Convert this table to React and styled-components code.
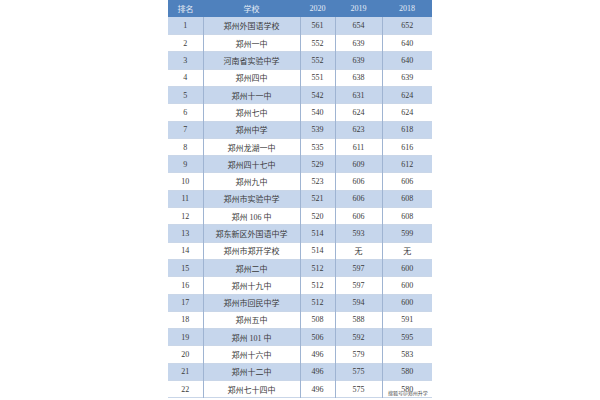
import React from "react";
import styled, { createGlobalStyle } from "styled-components";

const GlobalStyle = createGlobalStyle`
  html, body {
    margin: 0;
    padding: 0;
    background: #ffffff;
    overflow: hidden;
  }
`;

const Page = styled.div`
  width: 600px;
  height: 400px;
  display: flex;
  justify-content: center;
  align-items: flex-start;
  position: relative;
  font-family: "Liberation Serif", "Noto Sans CJK SC", serif;
`;

const Table = styled.table`
  width: 264px;
  border-collapse: collapse;
  table-layout: fixed;
  font-size: 8px;
  color: #3a3a3a;
`;

const HeadRow = styled.tr`
  height: 17.3px;
  background: #4f81bd;
`;

const Th = styled.th`
  font-weight: normal;
  color: #e4ecf6;
  text-align: center;
  padding: 0;
  width: ${(p) => p.w}px;
`;

const Row = styled.tr`
  height: 17.3px;
  background: ${(p) => (p.shade ? "#c6d6ec" : "#ffffff")};
  border-bottom: 1px solid #c9d6e8;
`;

const Td = styled.td`
  text-align: center;
  padding: 0;
  border-left: ${(p) => (p.first ? "none" : "1px solid #9fb4d2")};
  white-space: nowrap;
`;

const Watermark = styled.span`
  position: absolute;
  left: 388px;
  top: 389px;
  font-family: "Noto Sans CJK SC", sans-serif;
  font-size: 5px;
  color: #4a4a4a;
  text-shadow: 0 0 1px #fff, 0 0 1px #fff;
`;

const cols = [
  { label: "排名", w: 35 },
  { label: "学校", w: 97 },
  { label: "2020", w: 35 },
  { label: "2019", w: 47 },
  { label: "2018", w: 50 },
];

const rows = [
  ["郑州外国语学校", "561", "654", "652"],
  ["郑州一中", "552", "639", "640"],
  ["河南省实验中学", "552", "639", "640"],
  ["郑州四中", "551", "638", "639"],
  ["郑州十一中", "542", "631", "624"],
  ["郑州七中", "540", "624", "624"],
  ["郑州中学", "539", "623", "618"],
  ["郑州龙湖一中", "535", "611", "616"],
  ["郑州四十七中", "529", "609", "612"],
  ["郑州九中", "523", "606", "606"],
  ["郑州市实验中学", "521", "606", "608"],
  ["郑州 106 中", "520", "606", "608"],
  ["郑东新区外国语中学", "514", "593", "599"],
  ["郑州市郑开学校", "514", "无", "无"],
  ["郑州二中", "512", "597", "600"],
  ["郑州十九中", "512", "597", "600"],
  ["郑州市回民中学", "512", "594", "600"],
  ["郑州五中", "508", "588", "591"],
  ["郑州 101 中", "506", "592", "595"],
  ["郑州十六中", "496", "579", "583"],
  ["郑州十二中", "496", "575", "580"],
  ["郑州七十四中", "496", "575", "580"],
];

export default function App() {
  return (
    <>
      <GlobalStyle />
      <Page>
        <Table>
          <thead>
            <HeadRow>
              {cols.map((c) => (
                <Th key={c.label} w={c.w}>
                  {c.label}
                </Th>
              ))}
            </HeadRow>
          </thead>
          <tbody>
            {rows.map((r, i) => (
              <Row key={i} shade={i % 2 === 0}>
                <Td first>{i + 1}</Td>
                {r.map((v, j) => (
                  <Td key={j}>{v}</Td>
                ))}
              </Row>
            ))}
          </tbody>
        </Table>
        <Watermark>搜狐号@郑州升学</Watermark>
      </Page>
    </>
  );
}
